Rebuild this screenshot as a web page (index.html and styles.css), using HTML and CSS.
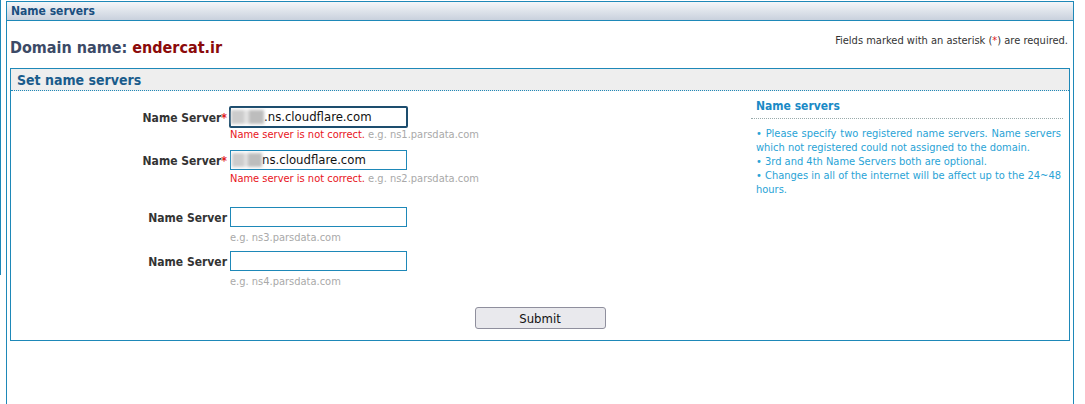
FILE: index.html
```html
<!DOCTYPE html>
<html>
<head>
<meta charset="utf-8">
<link rel="stylesheet" href="styles.css">
</head>
<body>
<div class="edge"></div>
<div class="panel">
  <div class="panel-head">Name servers</div>
  <div class="panel-body">
    <div class="top-row">
      <h1 class="domain">Domain name: <span class="domain-name">endercat.ir</span></h1>
      <p class="req-note">Fields marked with an asterisk (<span class="star">*</span>) are required.</p>
    </div>
    <div class="box">
      <div class="box-head">Set name servers</div>
      <div class="box-body">
        <div class="form">
          <div class="row row1">
            <label class="lbl">Name Server<span class="star">*</span></label>
            <div class="field">
              <div class="input focused"><span class="blur b1"></span>.ns.cloudflare.com</div>
              <div class="msg"><span class="err">Name server is not correct.</span> <span class="hint">e.g. ns1.parsdata.com</span></div>
            </div>
          </div>
          <div class="row row2">
            <label class="lbl">Name Server<span class="star">*</span></label>
            <div class="field">
              <div class="input"><span class="blur b2"></span>ns.cloudflare.com</div>
              <div class="msg msg-mid"><span class="err">Name server is not correct.</span> <span class="hint">e.g. ns2.parsdata.com</span></div>
            </div>
          </div>
          <div class="row row3">
            <label class="lbl">Name Server</label>
            <div class="field">
              <div class="input"></div>
              <div class="msg msg-low"><span class="hint">e.g. ns3.parsdata.com</span></div>
            </div>
          </div>
          <div class="row row4">
            <label class="lbl">Name Server</label>
            <div class="field">
              <div class="input"></div>
              <div class="msg msg-low"><span class="hint">e.g. ns4.parsdata.com</span></div>
            </div>
          </div>
        </div>
        <div class="info">
          <div class="info-head">Name servers</div>
          <ul class="info-list">
            <li>&bull; Please specify two registered name servers. Name servers which not registered could not assigned to the domain.</li>
            <li>&bull; 3rd and 4th Name Servers both are optional.</li>
            <li>&bull; Changes in all of the internet will be affect up to the 24~48 hours.</li>
          </ul>
        </div>
      </div>
      <div class="actions"><button class="submit">Submit</button></div>
    </div>
  </div>
</div>
</body>
</html>
```
FILE: styles.css
```css
html, body {
  margin: 0;
  padding: 0;
  background: #fff;
}
body {
  display: flex;
  align-items: flex-start;
  font-family: "DejaVu Sans Condensed", "DejaVu Sans", sans-serif;
  font-size: 11px;
  color: #333;
  height: 404px;
  overflow: hidden;
}
.edge {
  width: 1px;
  height: 275px;
  background: #1e88b8;
  flex: none;
}
.panel {
  margin: 1px 0 0 5px;
  width: 1066px;
  height: 420px;
  border: 1px solid #1e88b8;
  flex: none;
}
.panel-head {
  height: 18px;
  line-height: 18px;
  padding-left: 4px;
  font-weight: bold;
  font-size: 12px;
  color: #1a4f80;
  background: linear-gradient(#f4f6f9, #c9d1dd);
  border-bottom: 1px solid #1e88b8;
}
.panel-body {
  padding: 0 3px;
}
.top-row {
  display: flex;
  justify-content: space-between;
  align-items: flex-start;
}
.domain {
  margin: 17px 0 0 0;
  font-size: 16px;
  font-weight: bold;
  color: #3c4a66;
  line-height: 20px;
}
.domain-name {
  color: #8b0a0a;
}
.req-note {
  margin: 13px 2px 0 0;
  font-size: 11px;
  color: #333;
}
.star {
  color: #e0201c;
}
.box {
  margin-top: 10px;
  border: 1px solid #1e88b8;
  height: 271px;
  display: flex;
  flex-direction: column;
}
.box-head {
  height: 21px;
  line-height: 23px;
  padding-left: 6px;
  background: #eeeeee;
  border-bottom: 1px dotted #1e88b8;
  font-size: 14px;
  font-weight: bold;
  color: #1a5c8c;
}
.box-body {
  display: flex;
  justify-content: space-between;
  flex: 1;
}
.form {
  padding-top: 16px;
}
.row {
  display: flex;
  align-items: flex-start;
}
.row1 { height: 43px; }
.row2 { height: 57px; }
.row3 { height: 44px; }
.lbl {
  width: 216px;
  padding-right: 3px;
  text-align: right;
  font-weight: bold;
  font-size: 12px;
  line-height: 20px;
  color: #333;
  padding-top: 1px;
}
.field {
  display: flex;
  flex-direction: column;
}
.input {
  box-sizing: border-box;
  width: 177px;
  height: 20px;
  border: 1px solid #1e88b8;
  font-size: 13px;
  line-height: 18px;
  color: #111;
  padding-left: 1px;
  display: flex;
  align-items: center;
  white-space: nowrap;
  font-family: "DejaVu Sans Condensed", "DejaVu Sans", sans-serif;
}
.input.focused {
  width: 179px;
  height: 22px;
  border: 2px solid #1d4d6e;
  border-radius: 2px;
  margin-left: -1px;
  margin-top: -1px;
  margin-bottom: -1px;
  padding-left: 0;
}
.blur {
  display: inline-block;
  height: 14px;
  background: linear-gradient(90deg, #ccc 0 40%, #e2e2e2 40% 55%, #bdbdbd 55% 100%);
  filter: blur(1.5px);
  flex: none;
}
.b1 { width: 33px; }
.b2 { width: 30px; }
.msg {
  font-size: 11px;
  line-height: 13px;
  margin-top: 1px;
}
.msg-mid { margin-top: 2px; }
.msg-low { margin-top: 4px; }
.err { color: #e8141c; }
.hint { color: #a9a9a9; }
.info {
  width: 312px;
  margin: 5px 6px 0 0;
}
.info-head {
  font-size: 12px;
  font-weight: bold;
  color: #1a8ac6;
  padding: 3px 0 5px 5px;
  border-bottom: 1px dotted #9aa;
}
.info-list {
  list-style: none;
  margin: 8px 0 0 0;
  padding: 0 2px 0 5px;
  color: #29a3d6;
  font-size: 11px;
  line-height: 14px;
  text-align: justify;
}
.actions {
  display: flex;
  justify-content: center;
  padding-bottom: 11px;
}
.submit {
  width: 131px;
  height: 22px;
  border: 1px solid #8f8f9d;
  border-radius: 3px;
  background: #e9e9ed;
  font-family: "DejaVu Sans Condensed", "DejaVu Sans", sans-serif;
  font-size: 13px;
  color: #111;
  padding: 0;
}
```
